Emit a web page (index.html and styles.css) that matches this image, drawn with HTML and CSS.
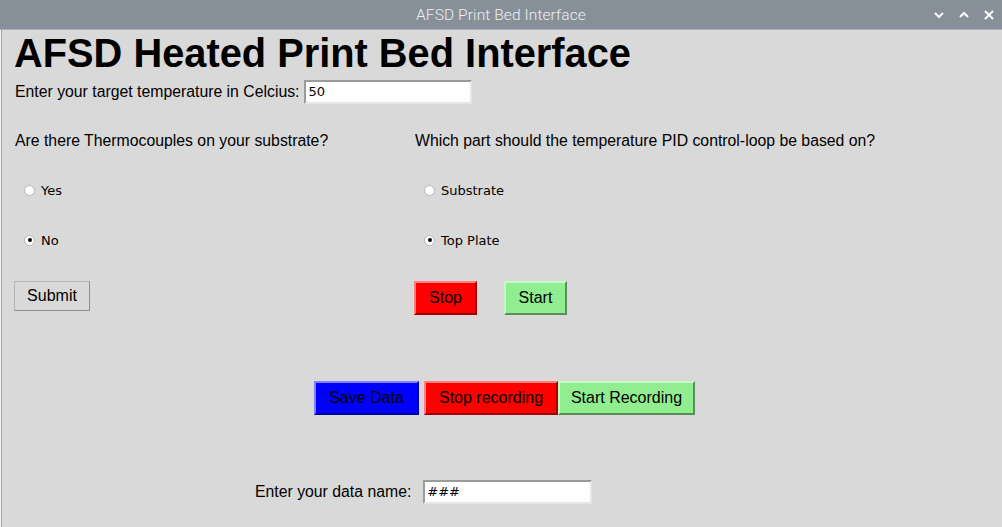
FILE: index.html
```html
<!DOCTYPE html>
<html>
<head>
<meta charset="utf-8">
<link rel="stylesheet" href="styles.css">
</head>
<body>
<div class="titlebar">
  <div class="title">AFSD Print Bed Interface</div>
  <div class="controls">
    <svg width="12" height="10" viewBox="0 0 12 10"><path d="M2 3 L6 7 L10 3" fill="none" stroke="#fff" stroke-width="2"/></svg>
    <svg width="12" height="10" viewBox="0 0 12 10"><path d="M2 7 L6 3 L10 7" fill="none" stroke="#fff" stroke-width="2"/></svg>
    <svg width="12" height="10" viewBox="0 0 12 10"><path d="M2 1 L10 9 M10 1 L2 9" fill="none" stroke="#fff" stroke-width="2"/></svg>
  </div>
</div>
<div class="window">
  <h1 class="heading">AFSD Heated Print Bed Interface</h1>
  <div class="temp-row">
    <span class="label">Enter your target temperature in Celcius:</span>
    <div class="entry temp-entry">50</div>
  </div>
  <div class="panel">
    <div class="col">
      <div class="q">Are there Thermocouples on your substrate?</div>
      <div class="radio"><span class="dot"></span><span>Yes</span></div>
      <div class="radio"><span class="dot on"></span><span>No</span></div>
      <div class="btn-row"><div class="btn plain">Submit</div></div>
    </div>
    <div class="col">
      <div class="q">Which part should the temperature PID control-loop be based on?</div>
      <div class="radio"><span class="dot"></span><span>Substrate</span></div>
      <div class="radio"><span class="dot on"></span><span>Top Plate</span></div>
      <div class="btn-row gap27">
        <div class="btn red small">Stop</div>
        <div class="btn green small">Start</div>
      </div>
    </div>
  </div>
  <div class="rec-row">
    <div class="btn blue save">Save Data</div>
    <div class="btn red stoprec">Stop recording</div>
    <div class="btn green startrec">Start Recording</div>
  </div>
  <div class="name-row">
    <span class="label">Enter your data name:</span>
    <div class="entry name-entry">###</div>
  </div>
</div>
</body>
</html>
```
FILE: styles.css
```css
* { box-sizing: border-box; }
html, body { margin: 0; padding: 0; }
body {
  width: 1002px;
  height: 527px;
  overflow: hidden;
  background: #d9d9d9;
  font-family: "Liberation Sans", Arial, sans-serif;
  color: #000;
}
.titlebar {
  height: 30px;
  background: #878f99;
  border-bottom: 1px solid #a9b0b8;
  display: flex;
  align-items: center;
  justify-content: center;
  position: relative;
}
.title {
  font-family: Roboto, "Liberation Sans", sans-serif;
  font-weight: 300;
  font-size: 15.5px;
  color: #eef0f2;
  letter-spacing: 0.1px;
}
.controls {
  position: absolute;
  right: 7px;
  top: 10px;
  display: flex;
  gap: 13px;
}
.controls svg { display: block; }
.window {
  height: 497px;
  border-left: 1px solid #f2f2f2;
  box-shadow: inset 1px 0 0 #a6a6a6;
  padding-left: 13px;
}
.heading {
  margin: 0;
  font-size: 39.8px;
  font-weight: bold;
  line-height: 46px;
  height: 50px;
  white-space: nowrap;
}
.temp-row {
  display: flex;
  align-items: center;
  height: 24px;
  gap: 5px;
  margin-left: 1px;
}
.label { font-size: 15.8px; white-space: nowrap; }
.entry {
  background: #fff;
  border-style: solid;
  border-width: 2px;
  border-color: #9b9b9b #e6e6e6 #e6e6e6 #9b9b9b;
  font-family: "DejaVu Sans", sans-serif;
  font-size: 13px;
  height: 24px;
  line-height: 20px;
  padding-left: 2px;
}
.temp-entry { width: 168px; }
.panel {
  display: grid;
  grid-template-columns: 400px 500px;
  margin-top: 27px;
}
.col { display: flex; flex-direction: column; }
.q {
  font-size: 15.8px;
  height: 20px;
  line-height: 20px;
  margin-left: 1px;
  white-space: nowrap;
}
.radio {
  height: 50px;
  display: flex;
  align-items: center;
  gap: 6px;
  font-family: "DejaVu Sans", sans-serif;
  font-size: 13px;
  padding-left: 10px;
}
.col .q + .radio { margin-top: 14px; }
.dot {
  width: 11px;
  height: 11px;
  border-radius: 50%;
  background: #fff;
  border: 1px solid #b5b5b5;
  position: relative;
}
.dot.on::after {
  content: "";
  position: absolute;
  left: 2.5px;
  top: 2.5px;
  width: 4px;
  height: 4px;
  border-radius: 50%;
  background: #000;
}
.btn-row {
  display: flex;
  margin-top: 16px;
}
.gap27 { gap: 27px; }
.btn {
  font-size: 16px;
  display: flex;
  align-items: center;
  justify-content: center;
  border-style: solid;
  border-width: 2px;
  white-space: nowrap;
}
.plain {
  width: 76px;
  height: 30px;
  border-width: 1px;
  border-color: #b4b4b4 #8e8e8e #8e8e8e #b4b4b4;
  background: #d9d9d9;
}
.red {
  background: #ff0000;
  border-color: #ff8080 #a00000 #a00000 #ff8080;
}
.green {
  background: #90ee90;
  border-color: #c8f7c8 #5a8f5a #5a8f5a #c8f7c8;
}
.blue {
  background: #0000ff;
  border-color: #8080ff #0000a0 #0000a0 #8080ff;
}
.small { width: 63px; height: 34px; }
.rec-row {
  display: flex;
  margin-left: 300px;
  margin-top: 66px;
}
.rec-row .btn { height: 34px; }
.save { width: 105px; margin-right: 5px; }
.stoprec { width: 134px; }
.startrec { width: 137px; }
.name-row {
  display: flex;
  align-items: center;
  margin-left: 241px;
  margin-top: 65px;
  height: 24px;
  gap: 12px;
}
.name-entry { width: 169px; }
```
